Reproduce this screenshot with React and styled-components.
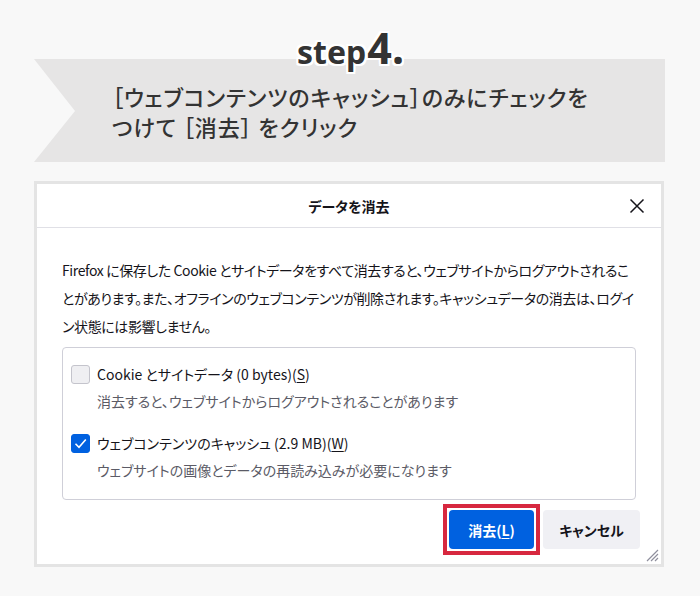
import React from 'react';
import styled, { createGlobalStyle } from 'styled-components';

const GlobalStyle = createGlobalStyle`
  html, body {
    margin: 0;
    padding: 0;
    background: #f8f8f8;
  }
  body {
    font-family: "Noto Sans CJK JP", "Noto Sans", sans-serif;
    color: #15141a;
  }
`;

const Page = styled.div`
  width: 700px;
  height: 596px;
  padding-top: 27px;
  box-sizing: border-box;
  overflow: hidden;
`;

const StepHeading = styled.div`
  position: relative;
  z-index: 1;
  display: flex;
  justify-content: center;
  align-items: baseline;
  height: 42px;
  line-height: 42px;
  margin-bottom: -10px;
  padding-left: 1px;
  font-family: "Noto Sans", sans-serif;
  font-weight: 700;
  color: #333;
  text-shadow:
    2px 0 0 #fff, -2px 0 0 #fff, 0 2px 0 #fff, 0 -2px 0 #fff,
    2px 2px 0 #fff, -2px -2px 0 #fff, 2px -2px 0 #fff, -2px 2px 0 #fff;
`;

const StepWord = styled.span`
  font-size: 32px;
`;

const StepNumber = styled.span`
  font-size: 43px;
  margin-left: 1px;
`;

const Banner = styled.div`
  margin: 0 35px 0 34px;
  height: 103px;
  box-sizing: border-box;
  padding: 22px 0 0 78px;
  background: #e6e5e5;
  clip-path: polygon(0 0, 100% 0, 100% 100%, 0 100%, 41px 52px);
`;

const BannerLine = styled.div`
  font-family: "Noto Sans CJK JP", sans-serif;
  font-size: 22px;
  font-weight: 500;
  line-height: 30px;
  letter-spacing: 0.9px;
  color: #333;
  white-space: pre;
  font-feature-settings: "palt";
`;

const Dialog = styled.div`
  position: relative;
  margin: 19px 0 0 34px;
  width: 630px;
  box-sizing: border-box;
  border: 3px solid #e4e4e4;
  background: #fff;
`;

const DialogHeader = styled.div`
  display: grid;
  grid-template-columns: 32px 1fr 32px;
  align-items: center;
  height: 43px;
  padding: 0 8px;
  border-bottom: 1px solid #e0e0e6;
`;

const DialogTitle = styled.div`
  grid-column: 2;
  text-align: center;
  font-size: 14px;
  font-weight: 700;
  font-feature-settings: "palt";
`;

const CloseButton = styled.div`
  grid-column: 3;
  width: 32px;
  height: 32px;
  display: flex;
  align-items: center;
  justify-content: center;
`;

const DialogBody = styled.div`
  padding: 28px 25px 0 25px;
`;

const Description = styled.div`
  font-size: 14px;
  line-height: 28px;
  letter-spacing: -0.4px;
  font-feature-settings: "palt";
`;

const Line = styled.div`
  white-space: nowrap;
`;

const GroupBox = styled.div`
  margin-top: 7px;
  border: 1px solid #cfcfd8;
  border-radius: 4px;
  padding: 16px 8px 19px;
`;

const Option = styled.div`
  & + & {
    margin-top: 22px;
  }
`;

const OptionRow = styled.div`
  display: flex;
  align-items: center;
  gap: 7px;
  height: 20px;
`;

const Checkbox = styled.div`
  width: 19px;
  height: 19px;
  box-sizing: border-box;
  border-radius: 3px;
  border: 1px solid ${p => (p.$checked ? '#0061e0' : '#c4c4cc')};
  background: ${p => (p.$checked ? '#0061e0' : '#efeff2')};
  display: flex;
  align-items: center;
  justify-content: center;
`;

const OptionLabel = styled.span`
  font-size: 14px;
  line-height: 20px;
  font-feature-settings: "palt";
`;

const Key = styled.span`
  text-decoration: underline;
  text-underline-offset: 2px;
`;

const OptionHint = styled.div`
  margin-top: 7px;
  padding-left: 26px;
  font-size: 14px;
  line-height: 20px;
  color: #5b5b66;
  font-feature-settings: "palt";
`;

const Footer = styled.div`
  display: flex;
  justify-content: flex-end;
  align-items: center;
  gap: 3px;
  padding: 4px 21px 9px 0;
`;

const Highlight = styled.div`
  border: 4px solid #d7283f;
  padding: 2px;
  background: #fff;
`;

const Button = styled.div`
  width: ${p => p.$width}px;
  height: 39px;
  box-sizing: border-box;
  border-radius: 4px;
  display: flex;
  align-items: center;
  justify-content: center;
  font-size: 14px;
  font-weight: 700;
  font-feature-settings: "palt";
  background: ${p => (p.$primary ? '#0061e0' : '#f0f0f4')};
  color: ${p => (p.$primary ? '#fff' : '#15141a')};
`;

const Grip = styled.svg`
  position: absolute;
  right: 2px;
  bottom: 2px;
`;

export default function App() {
  return (
    <Page>
      <GlobalStyle />
      <StepHeading>
        <StepWord>step</StepWord>
        <StepNumber>4.</StepNumber>
      </StepHeading>
      <Banner>
        <BannerLine>［ウェブコンテンツのキャッシュ］のみにチェックを</BannerLine>
        <BannerLine>つけて ［消去］ をクリック</BannerLine>
      </Banner>

      <Dialog>
        <DialogHeader>
          <DialogTitle>データを消去</DialogTitle>
          <CloseButton>
            <svg width="16" height="16" viewBox="0 0 16 16">
              <path d="M1.5 1.5 L14.5 14.5 M14.5 1.5 L1.5 14.5" stroke="#15141a" strokeWidth="1.5" fill="none" />
            </svg>
          </CloseButton>
        </DialogHeader>

        <DialogBody>
          <Description>
            <Line>Firefox に保存した Cookie とサイトデータをすべて消去すると、ウェブサイトからログアウトされるこ</Line>
            <Line>とがあります。また、オフラインのウェブコンテンツが削除されます。キャッシュデータの消去は、ログイ</Line>
            <Line>ン状態には影響しません。</Line>
          </Description>

          <GroupBox>
            <Option>
              <OptionRow>
                <Checkbox />
                <OptionLabel>Cookie とサイトデータ (0 bytes)(<Key>S</Key>)</OptionLabel>
              </OptionRow>
              <OptionHint>消去すると、ウェブサイトからログアウトされることがあります</OptionHint>
            </Option>
            <Option>
              <OptionRow>
                <Checkbox $checked>
                  <svg width="13" height="13" viewBox="0 0 13 13">
                    <path d="M1.5 6.8 L5 10.3 L11.8 2.5" stroke="#fff" strokeWidth="1.6" fill="none" />
                  </svg>
                </Checkbox>
                <OptionLabel>ウェブコンテンツのキャッシュ (2.9 MB)(<Key>W</Key>)</OptionLabel>
              </OptionRow>
              <OptionHint>ウェブサイトの画像とデータの再読み込みが必要になります</OptionHint>
            </Option>
          </GroupBox>
        </DialogBody>

        <Footer>
          <Highlight>
            <Button $primary $width={85}>消去(<Key>L</Key>)</Button>
          </Highlight>
          <Button $width={97}>キャンセル</Button>
        </Footer>

        <Grip width="15" height="15" viewBox="0 0 15 15">
          <path d="M14 3 L3 14 M14 7 L7 14 M14 11 L11 14" stroke="#8f8f9d" strokeWidth="1.2" fill="none" />
        </Grip>
      </Dialog>
    </Page>
  );
}
